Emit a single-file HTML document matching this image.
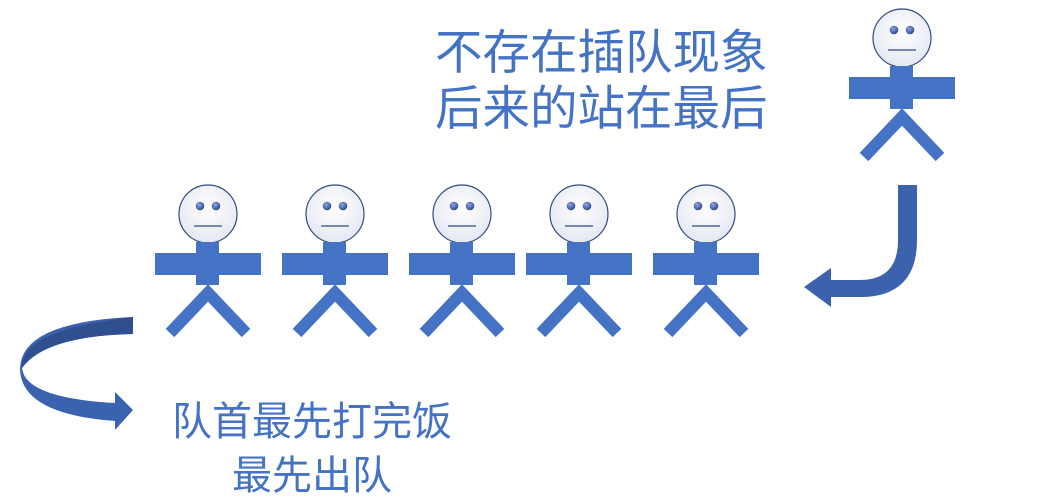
<!DOCTYPE html>
<html><head><meta charset="utf-8"><style>
body{margin:0;width:1039px;height:504px;background:#fff;overflow:hidden;position:relative;font-family:"Liberation Sans","Noto Sans CJK SC",sans-serif;}
.t{position:absolute;color:#4472C4;white-space:nowrap;}
</style></head><body>
<svg width="1039" height="504" style="position:absolute;left:0;top:0">
<defs>
<radialGradient id="hg" cx="0.5" cy="0.4" r="0.6"><stop offset="0" stop-color="#fff"/><stop offset="1" stop-color="#e4e8f2"/></radialGradient>
<radialGradient id="eg" cx="0.4" cy="0.35" r="0.6"><stop offset="0" stop-color="#8fa8de"/><stop offset="1" stop-color="#2f4f9a"/></radialGradient>
<g id="p">
<circle cx="0" cy="0" r="29" fill="url(#hg)" stroke="#2F4A80" stroke-width="1.2"/>
<circle cx="-8" cy="-8" r="4.3" fill="url(#eg)"/><circle cx="8" cy="-8" r="4.3" fill="url(#eg)"/>
<line x1="-14" y1="12" x2="14" y2="12" stroke="#2F4A80" stroke-width="1.2"/>
<rect x="-12" y="28" width="23" height="43" fill="#4472C4"/>
<rect x="-53" y="39" width="106" height="22" fill="#4472C4"/>
<polyline points="-38,119 0,79 38,119" fill="none" stroke="#4472C4" stroke-width="12"/>
</g>
</defs>
<use href="#p" x="208" y="214"/>
<use href="#p" x="335" y="214"/>
<use href="#p" x="462" y="214"/>
<use href="#p" x="579" y="214"/>
<use href="#p" x="706" y="214"/>
<use href="#p" x="902" y="38"/>
<path d="M898,185 L917,185 L917,240 Q917,297 860,297 L831,297 L831,307 L804,287 L831,268 L831,280 L860,280 Q898,280 898,240 Z" fill="#3D62AD"/>
<path d="M133,317 L133,334 Q45,336 22,368 Q25,398 115,403 L115,392 L133,410 L115,430 L115,421 Q20,414 20,368 Q22,322 133,317 Z" fill="#3A62AE"/>
<path d="M133,317 L133,334 Q45,336 22,368 Q20,330 133,317 Z" fill="#2F4F8E"/>
</svg>
<div class="t" style="left:435px;top:26px;font-size:47.5px;line-height:56px">不存在插队现象<br>后来的站在最后</div>
<div class="t" style="left:172px;top:395px;font-size:40px;line-height:54px;text-align:center">队首最先打完饭<br>最先出队</div>
</body></html>
